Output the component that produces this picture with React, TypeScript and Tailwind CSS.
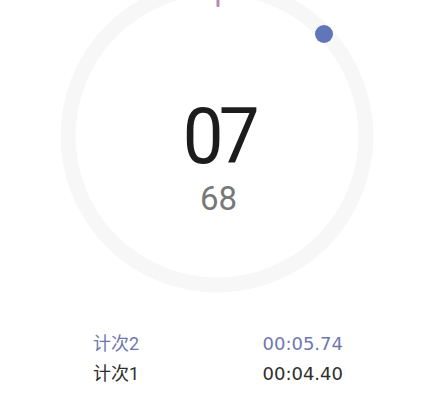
import React from "react";

export default function App() {
  return (
    <div className="w-[443px] h-[414px] bg-white overflow-hidden" style={{ fontFamily: "Roboto, 'Noto Sans CJK SC', sans-serif" }}>
      <div className="relative h-[300px] flex flex-col items-center pr-[6px]">
        <svg className="absolute inset-0" width="443" height="300" viewBox="0 0 443 300">
          <circle cx="217" cy="136" r="149" fill="none" stroke="#f7f7f7" strokeWidth="15" />
          <rect x="216.5" y="-2" width="3" height="9" rx="1" fill="#b48aae" />
          <circle cx="324" cy="34" r="9" fill="#6175b9" />
        </svg>
        <div className="relative mt-[98px] text-[78px] leading-none font-normal tracking-[-5px] text-[#1c1c1c] scale-x-[0.93]">07</div>
        <div className="relative mt-[6px] text-[33px] leading-none text-[#787878]">68</div>
      </div>
      <div className="mt-[28px] pl-[93px] pr-[100px] flex flex-col text-[18px]">
        <div className="h-[30px] flex items-center justify-between text-[#6f77b1]">
          <span>计次2</span>
          <span style={{ fontFamily: "'DejaVu Sans', sans-serif" }} className="text-[18px]">00:05.74</span>
        </div>
        <div className="h-[30px] flex items-center justify-between text-[#2e2e2e]">
          <span>计次1</span>
          <span style={{ fontFamily: "'DejaVu Sans', sans-serif" }} className="text-[18px]">00:04.40</span>
        </div>
      </div>
    </div>
  );
}
